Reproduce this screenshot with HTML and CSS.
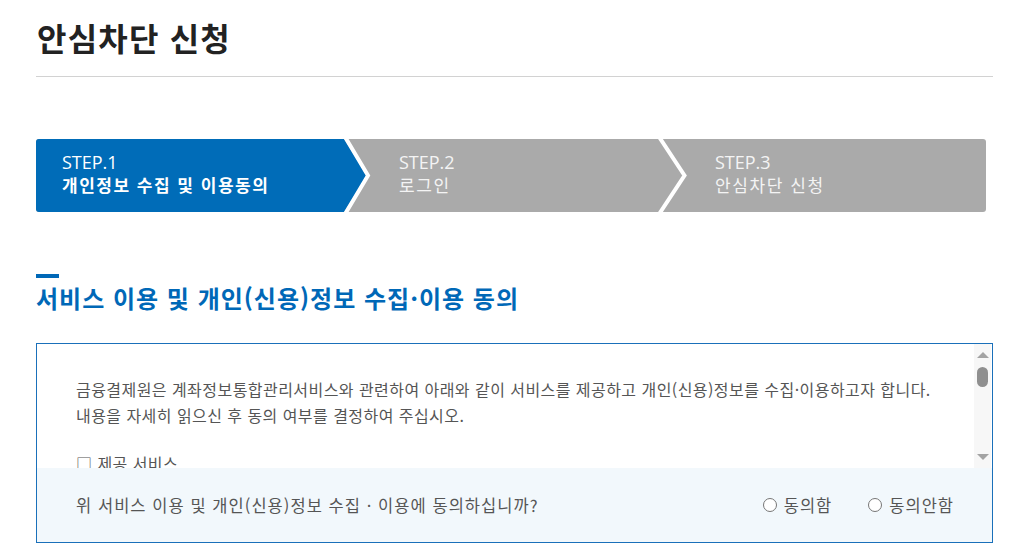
FILE: index.html
```html
<!DOCTYPE html>
<html lang="ko">
<head>
<meta charset="utf-8">
<title>안심차단 신청</title>
<link rel="stylesheet" href="styles.css">
</head>
<body>
<div class="page">
  <div class="title-wrap">
    <h1 class="title">안심차단 신청</h1>
  </div>

  <div class="steps">
    <svg class="steps-bg" width="950" height="73" viewBox="0 0 950 73" aria-hidden="true">
      <polygon points="0,0 308,0 331,36.5 308,73 0,73" fill="#006cb8"/>
      <polyline points="308.5,-3 332,36.5 308.5,76" fill="none" stroke="#ffffff" stroke-width="4"/>
      <polyline points="622.5,-3 648.5,36.5 622.5,76" fill="none" stroke="#ffffff" stroke-width="4"/>
    </svg>
    <div class="step step-active step-1">
      <span class="step-num">STEP.1</span>
      <span class="step-name">개인정보 수집 및 이용동의</span>
    </div>
    <div class="step step-2">
      <span class="step-num">STEP.2</span>
      <span class="step-name">로그인</span>
    </div>
    <div class="step step-3">
      <span class="step-num">STEP.3</span>
      <span class="step-name">안심차단 신청</span>
    </div>
  </div>

  <div class="section-bar"></div>
  <h2 class="section-title">서비스 이용 및 개인(신용)정보 수집·이용 동의</h2>

  <div class="agree-box">
    <div class="scroll-area">
      <div class="scroll-content">
        <p class="para">금융결제원은 계좌정보통합관리서비스와 관련하여 아래와 같이 서비스를 제공하고 개인(신용)정보를 수집·이용하고자 합니다.<br>내용을 자세히 읽으신 후 동의 여부를 결정하여 주십시오.</p>
        <p class="para para-gap">□ 제공 서비스</p>
      </div>
      <div class="scrollbar">
        <span class="sb-up"></span>
        <span class="sb-thumb"></span>
        <span class="sb-fill"></span>
        <span class="sb-down"></span>
      </div>
    </div>
    <div class="agree-footer">
      <span class="question">위 서비스 이용 및 개인(신용)정보 수집 · 이용에 동의하십니까?</span>
      <div class="radios">
        <label class="radio"><span class="radio-dot"></span>동의함</label>
        <label class="radio"><span class="radio-dot"></span>동의안함</label>
      </div>
    </div>
  </div>
</div>
</body>
</html>
```

FILE: styles.css
```css
* { box-sizing: border-box; }

html, body {
  margin: 0;
  padding: 0;
  background: #ffffff;
}

body {
  font-family: "Noto Sans CJK KR", "Noto Sans", sans-serif;
  color: #555555;
}

.page {
  width: 1009px;
  padding: 0 16px 0 36px;
}

.title-wrap {
  padding-top: 15px;
  padding-bottom: 17px;
  border-bottom: 1px solid #d2d2d2;
}

.title {
  margin: 0;
  font-size: 32px;
  line-height: 44px;
  font-weight: 700;
  color: #222222;
  letter-spacing: 1.2px;
  padding-left: 1px;
}

.steps {
  position: relative;
  margin-top: 62px;
  width: 950px;
  height: 73px;
  background: #aaaaaa;
  border-radius: 3px;
  overflow: hidden;
  display: flex;
}

.steps-bg {
  position: absolute;
  left: 0;
  top: 0;
}

.step {
  position: relative;
  display: flex;
  flex-direction: column;
  padding-left: 26px;
  padding-top: 13px;
  color: #f4f4f4;
  font-size: 17px;
}

.step-1 { width: 337px; color: #ffffff; }
.step-2 { width: 316px; }
.step-3 { flex: 1; }

.step-num {
  font-family: "Open Sans", "Noto Sans", sans-serif;
  font-size: 18px;
  line-height: 21px;
  font-weight: 400;
}

.step-name {
  line-height: 24px;
  letter-spacing: 1.6px;
}

.step-active .step-name {
  font-weight: 700;
  font-size: 17px;
  letter-spacing: 1.5px;
}

.section-bar {
  margin-top: 62px;
  width: 23px;
  height: 4px;
  background: #0068b7;
}

.section-title {
  margin: 4px 0 0 0;
  font-size: 24px;
  line-height: 32px;
  font-weight: 700;
  color: #0068b7;
  letter-spacing: 1px;
}

.agree-box {
  margin-top: 29px;
  width: 957px;
  border: 1px solid #1a70ba;
  display: flex;
  flex-direction: column;
}

.scroll-area {
  display: flex;
  height: 124px;
}

.scroll-content {
  flex: 1;
  overflow: hidden;
  padding: 32px 0 0 39px;
  font-size: 16px;
  line-height: 26px;
  letter-spacing: 0.45px;
  color: #555555;
}

.para {
  margin: 0;
}

.para-gap {
  margin-top: 22px;
}

.scrollbar {
  width: 17px;
  margin-right: 1px;
  background: #f7f7f7;
  display: flex;
  flex-direction: column;
  align-items: center;
  padding: 8px 0 8px 0;
}

.sb-up {
  width: 0;
  height: 0;
  border-left: 6.5px solid transparent;
  border-right: 6.5px solid transparent;
  border-bottom: 6px solid #a3a3a3;
}

.sb-thumb {
  margin-top: 9px;
  width: 11px;
  height: 20px;
  border-radius: 5.5px;
  background: #8f8f8f;
}

.sb-fill { flex: 1; }

.sb-down {
  width: 0;
  height: 0;
  border-left: 6.5px solid transparent;
  border-right: 6.5px solid transparent;
  border-top: 6px solid #a3a3a3;
}

.agree-footer {
  height: 74px;
  background: #f2f8fc;
  display: flex;
  align-items: center;
  justify-content: space-between;
  padding: 0 38px 0 39px;
  font-size: 16.5px;
  letter-spacing: 1.05px;
  color: #555555;
}

.radios {
  display: flex;
  gap: 36px;
}

.radio {
  display: flex;
  align-items: center;
  letter-spacing: 1px;
}

.radio-dot {
  width: 14px;
  height: 14px;
  border-radius: 50%;
  border: 1px solid #767676;
  background: #ffffff;
  margin-right: 7px;
}
```
